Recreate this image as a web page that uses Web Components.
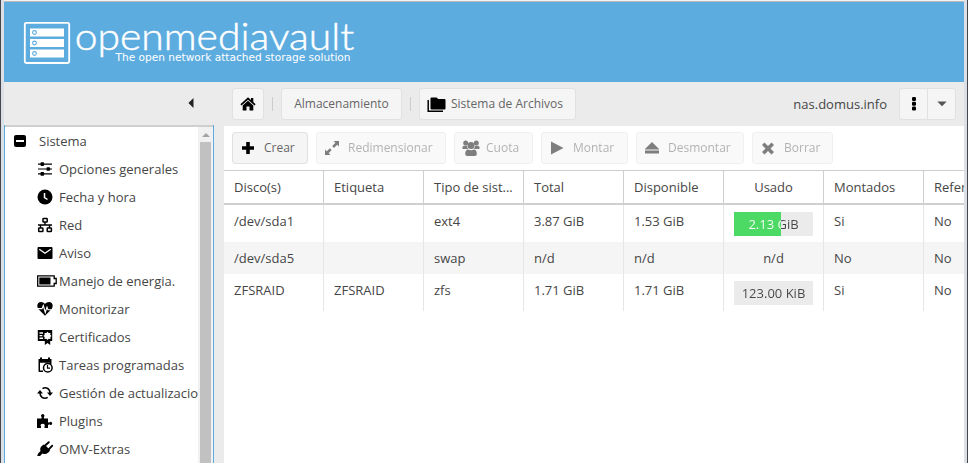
<!DOCTYPE html>
<html lang="es">
<head>
<meta charset="utf-8">
<title>openmediavault</title>
<style>
html,body{margin:0;height:100%;overflow:hidden;background:#ebebeb}
body{font:13px/20px "Open Sans","Noto Sans",sans-serif;color:#464646}
</style>
</head>
<body>
<omv-app></omv-app>
<script>
const icons = {
  home:'<path d="M8 1.300 11 4V2h2.300v4L15.600 8.200 14.500 9.500 8 3.700 1.500 9.500 .4 8.200z"/><path d="M8 4.700 13.300 9.400V14.500H9.500v-4h-3v4H2.700V9.400z"/>',
  folders:'<path d="M4.500 1.500h5l1.800 1.500h6.200q1 0 1 1v8.500q0 1-1 1H4.500q-1 0-1-1v-10q0-1 1-1z"/><path d="M1.200 4v11.200H16" fill="none" stroke="#000" stroke-width="1.500"/>',
  plus:'<path d="M6.200 2h3.600v4.200H14v3.600H9.800V14H6.200V9.800H2V6.200h4.200z"/>',
  resize:'<path d="M9.500 1H15v5.500l-1.800-1.800-3.200 3.200L8.200 6l3.200-3.200zM1 9.500l1.800 1.800L5.800 8.200 7.600 10 4.700 13.200 6.500 15H1z"/>',
  users:'<circle cx="3.700" cy="3.100" r="2.500"/><circle cx="14.300" cy="3.100" r="2.500"/><circle cx="9" cy="5.500" r="3.500"/><path d="M.5 9V7.300Q.5 5.700 2 5.700h3q0 2 1.300 3.300zM17.500 9V7.300q0-1.600-1.500-1.600h-3q0 2-1.300 3.300zM3.200 14q0-4.600 3-4.600Q9 11 11.800 9.400q3 0 3 4.600 0 2-2 2H5.200q-2 0-2-2z"/>',
  play:'<path d="M2 1.400 14.500 8 2 14.600z"/>',
  eject:'<path d="M8 2 15 9H1z"/><path d="M1 9.500h14v1H1zM1 11h14v2.500H1z"/>',
  cross:'<path d="M4.500 2.500 8 6 11.500 2.500 14 5 10.500 8.500 14 12 11.500 14.500 8 11 4.500 14.500 2 12 5.500 8.500 2 5z"/>',
  dots:'<rect x="6" y="1" width="4" height="3.900" rx="1.200"/><rect x="6" y="5.800" width="4" height="3.900" rx="1.200"/><rect x="6" y="10.600" width="4" height="3.900" rx="1.200"/>',
  down:'<path d="M3.300 5.500h9.400L8 10.300z"/>',
  left:'<path d="M10.500 3v10L5.400 8z"/>',
  minus:'<rect x="2" y="2" width="12" height="12" rx="2"/><path d="M4 7h8v2H4z" fill="#fff"/>',
  sliders:'<path d="M1 2.500h14v1.200H1zM1 7.400h14v1.200H1zM1 12.300h14v1.200H1z"/><rect x="3.500" y="1.300" width="3.600" height="3.600" rx=".8"/><rect x="9.500" y="6.200" width="3.600" height="3.600" rx=".8"/><rect x="3.500" y="11.100" width="3.600" height="3.600" rx=".8"/>',
  clock:'<circle cx="8" cy="8" r="7.500"/><path d="M7.500 4v4.500l3 2" fill="none" stroke="#fff" stroke-width="1.500"/>',
  network:'<path d="M8 5v3M1 8h14M3.500 8v3M12.500 8v3" fill="none" stroke="#000" stroke-width="1.400"/><g fill="none" stroke="#000" stroke-width="1.500"><rect x="6" y="1.500" width="4.200" height="3.600" rx=".6"/><rect x="1.700" y="11" width="4.200" height="3.600" rx=".6"/><rect x="10.200" y="11" width="4.200" height="3.600" rx=".6"/></g>',
  mail:'<rect x=".5" y="2" width="15" height="12" rx="1"/><path d="m2.300 4.200 5.700 4 5.700-4" fill="none" stroke="#fff" stroke-width="1.300"/>',
  battery:'<path d="M.7 2.800h16.500V5.500h2v5h-2v2.700H.7z" fill="none" stroke="#000" stroke-width="1.300"/><path d="M2.300 4.500h11.200v7H2.300z"/>',
  heart:'<path d="M8 14.800 1.300 8C-1 4.300 1 .8 4 .9 6.200 1 7.300 2 8 3c.7-1 1.800-2 4-2.100 3-.1 5 3.400 2.700 7.100z"/><path d="M1 7.600h4L6.300 4.500l2 7L10 6.200l1 2.500h4" fill="none" stroke="#fff" stroke-width="1.100"/>',
  cert:'<path d="M.8 1h14.400v11h-2v4l-2.700-2-2.700 2v-4h-7z"/><path d="M2.500 3.300H6v1.400H2.500zM2.500 6h2.800v1.300H2.500zM2.500 8.600H6V10H2.500z" fill="#fff"/><path d="m10.500 2.800 1.200 1.300 1.800-.2-.2 1.800 1.300 1.200-1.300 1.200.2 1.800-1.800-.2-1.200 1.300-1.200-1.300-1.800.2.2-1.800L6.400 6.900l1.300-1.200-.2-1.800 1.800.2z" fill="#fff"/>',
  calendar:'<path d="M3 .5h2V2h6V.5h2V2h1.500v5H13V5.800H3v7.700h3V15H2.500Q1.500 15 1.500 14V2H3z"/><circle cx="10.800" cy="10.800" r="4.300" fill="#fff" stroke="#000" stroke-width="1.500"/><path d="M10.500 8v3.200H13" fill="none" stroke="#000" stroke-width="1.200"/>',
  sync:'<path d="M5.500 3.600Q8 2 10.800 3.500 13 5 13 8M10.700 12.400Q8 14 5.200 12.500 3 11 3 8" fill="none" stroke="#000" stroke-width="1.600"/><path d="M10 7.500h6L13 11zM0 8.500h6L3 5z"/>',
  puzzle:'<path d="M0 5.500h4.200q1-.5.3-1.600A1.700 1.700 0 1 1 7 3.900Q6.300 5 7.300 5.500H11V9q.7.900 1.800.2a1.500 1.500 0 1 1 0 2.400Q11.700 11 11 12v3H7.500v-1.500q1-1.500-.5-2.500-1.600-.8-3 .3-1 1 0 2.200V15H0z"/>',
  plug:'<path d="M6.500 3.500 13 9.800 11.300 11.500Q8.500 14 5.500 12.500L3 15H.2l.9-2.500L3.500 10Q2.500 7 4.800 5.100z"/><path d="M7.500 5 11.800 1.200M11.500 8.700 15.300 4.700" fill="none" stroke="#000" stroke-width="1.900" stroke-linecap="round"/><path d="m8 4 5 5-1 1-5-5z"/>'
};
const define = (name, markup) => customElements.define(name, class extends HTMLElement {
  connectedCallback(){
    if (this.shadowRoot) return;
    const root = this.attachShadow({mode:'open'});
    root.innerHTML = typeof markup === 'function' ? markup(this) : markup;
  }
});

define('omv-icon', el => {
  const w = el.getAttribute('w') || 16;
  return `<style>:host{display:block;width:${w}px;height:16px;flex:none}svg{display:block;fill:currentColor}</style>
  <svg width="${w}" height="16" viewBox="0 0 ${w} 16">${icons[el.getAttribute('name')]}</svg>`;
});

define('omv-button', `<style>
:host{display:flex;box-sizing:border-box;height:32px;align-items:center;border:1px solid #e1e1e1;border-radius:3px;background:#f5f5f5;color:#666;white-space:nowrap;flex:none;font-size:12px;line-height:18px;padding:0 0 1px 7px;gap:7px}
:host([disabled]){opacity:.5}
::slotted(omv-icon){color:#000}
:host([center]){justify-content:center;padding:0}
</style><slot></slot>`);

define('omv-logo', `<style>:host{display:block;width:360px;height:80px}svg{display:block}</style>
<svg width="360" height="80" viewBox="4 2 360 80">
<rect x="24.800" y="22.800" width="44.400" height="40.200" rx="1.500" fill="none" stroke="#fff" stroke-width="1.800"/>
<g fill="#fff"><rect x="30" y="28.500" width="34" height="8"/><rect x="30" y="39" width="34" height="8"/><rect x="30" y="49.500" width="34" height="8"/></g>
<g fill="none" stroke="#5dacdf" stroke-width="1.100"><circle cx="34.500" cy="32.500" r="1.900"/><circle cx="34.500" cy="43" r="1.900"/><circle cx="34.500" cy="53.500" r="1.900"/></g>
<text x="74.700" y="50" font-family="Lato,sans-serif" font-weight="300" font-size="38" fill="#fff" stroke="#fff" stroke-width=".45" textLength="279.500" lengthAdjust="spacingAndGlyphs">openmediavault</text>
<text x="115.500" y="61" font-family="DejaVu Sans,sans-serif" font-size="10.500" fill="#fff" textLength="235" lengthAdjust="spacingAndGlyphs">The open network attached storage solution</text>
</svg>`);

define('nav-item', el => `<style>
:host{display:flex;height:28px;align-items:center;padding-left:32px;white-space:nowrap}
:host([root]){padding-left:7px}
.i{width:22px;flex:none;color:#000}
:host([root]) .i{width:27px}
</style><div class="i"><omv-icon name="${el.getAttribute('icon')}" w="${el.getAttribute('icon') === 'battery' ? 21 : 16}"></omv-icon></div><span><slot></slot></span>`);

define('omv-sidebar', `<style>
:host{display:flex;flex-direction:column;width:210px;flex:none}
.head{height:43px;box-sizing:border-box;padding:13px 15px 0 0;display:flex;justify-content:flex-end;color:#222}
.panel{flex:1;min-height:0;display:flex;background:#fff;border:1px solid #5dacdf;border-width:0 1px;box-shadow:inset 0 2px #cfcfcf}
.tree{width:193px;overflow:hidden;padding-top:2px}
nav-item[icon=battery],nav-item[icon=puzzle]{margin-left:0}
.scroll{width:15px;margin-top:2px;background:#f1f1f1;display:flex;flex-direction:column;align-items:center}
.arrow{width:0;height:0;border:4px solid transparent;border-top:0;border-bottom:4px solid #a3a3a3;margin:6px 0 5px}
.thumb{width:11px;flex:1;background:#c1c1c1}
</style>
<div class="head"><omv-icon name="left"></omv-icon></div>
<div class="panel"><div class="tree">
<nav-item root icon="minus">Sistema</nav-item>
<nav-item icon="sliders">Opciones generales</nav-item>
<nav-item icon="clock">Fecha y hora</nav-item>
<nav-item icon="network">Red</nav-item>
<nav-item icon="mail">Aviso</nav-item>
<nav-item icon="battery">Manejo de energia.</nav-item>
<nav-item icon="heart">Monitorizar</nav-item>
<nav-item icon="cert">Certificados</nav-item>
<nav-item icon="calendar">Tareas programadas</nav-item>
<nav-item icon="sync">Gestión de actualizacio</nav-item>
<nav-item icon="puzzle">Plugins</nav-item>
<nav-item icon="plug">OMV-Extras</nav-item>
</div><div class="scroll"><div class="arrow"></div><div class="thumb"></div></div></div>`);

define('omv-breadcrumb', `<style>
:host{display:flex;height:44px;box-sizing:border-box;padding:6px 8px 0;align-items:flex-start}
i{width:1px;height:14px;background:#ccc;margin:9px 8px 0}
span{margin:6px 12px 0 auto}
.l{border-radius:3px 0 0 3px}.r{border-radius:0 3px 3px 0;margin-left:-1px}
.r omv-icon{color:#555}
</style>
<omv-button center style="width:32px"><omv-icon name="home"></omv-icon></omv-button><i></i>
<omv-button center style="width:121px">Almacenamiento</omv-button><i></i>
<omv-button style="width:157px;gap:4px"><omv-icon name="folders" w="20"></omv-icon>Sistema de Archivos</omv-button>
<span>nas.domus.info</span>
<omv-button center class="l" style="width:29px"><omv-icon name="dots"></omv-icon></omv-button>
<omv-button center class="r" style="width:29px"><omv-icon name="down"></omv-icon></omv-button>`);

define('omv-toolbar', `<style>:host{display:flex;gap:8px;height:44px;padding:6px 8px 0;box-sizing:border-box;background:#fff}</style>
<omv-button style="width:76px;gap:8px"><omv-icon name="plus"></omv-icon>Crear</omv-button>
<omv-button disabled style="width:130px;gap:8px"><omv-icon name="resize"></omv-icon>Redimensionar</omv-button>
<omv-button disabled style="width:79px;gap:6px"><omv-icon name="users" w="18"></omv-icon>Cuota</omv-button>
<omv-button disabled style="width:87px;gap:8px"><omv-icon name="play"></omv-icon>Montar</omv-button>
<omv-button disabled style="width:108px;gap:8px"><omv-icon name="eject"></omv-icon>Desmontar</omv-button>
<omv-button disabled style="width:81px;gap:8px"><omv-icon name="cross"></omv-icon>Borrar</omv-button>`);

define('usage-bar', el => {
  const v = el.getAttribute('value') + 'px';
  return `<style>
:host{display:block;margin-top:1px;height:24px;width:79px;background:linear-gradient(90deg,#4cd964 ${v},#ebebeb ${v});text-align:center;line-height:25px}
div{background:linear-gradient(90deg,#fff ${v},#464646 ${v});-webkit-background-clip:text;background-clip:text;color:transparent}
</style><div>${el.getAttribute('label')}</div>`;
});

const rows = [
  [37,'/dev/sda1','','ext4','3.87 GiB','1.53 GiB','<usage-bar value="47" label="2.13 GiB"></usage-bar>','Si','No'],
  [32,'/dev/sda5','','swap','n/d','n/d','n/d','No','No'],
  [37,'ZFSRAID','ZFSRAID','zfs','1.71 GiB','1.71 GiB','<usage-bar value="0" label="123.00 KiB"></usage-bar>','Si','No']
];
const columns = ['Disco(s)','Etiqueta','Tipo de sist...','Total','Disponible','Usado','Montados','Refer'];
define('omv-grid', () => `<style>
:host{display:block;background:#fff;flex:1;overflow:hidden;border-top:1px solid #cfcfcf}
.row{display:grid;grid-template-columns:repeat(8,100px);width:800px}
.row>div{box-sizing:border-box;padding:6px 10px 0;border-right:1px solid #e6e6e6;white-space:nowrap}
.row>div:nth-child(6){text-align:center}
.head{height:34px;box-sizing:border-box;border-bottom:2px solid #cfcfcf}
.head>div{border-color:#cfcfcf}
.alt{background:#f5f5f5}
</style>
<div class="row head">${columns.map(t => `<div>${t}</div>`).join('')}</div>
${rows.map(([h, ...c], i) => `<div class="row${i % 2 ? ' alt' : ''}" style="height:${h}px">${c.map(t => `<div>${t}</div>`).join('')}</div>`).join('')}`);

define('omv-app', `<style>
:host{display:flex;flex-direction:column;box-sizing:border-box;width:968px;height:463px;overflow:hidden;border:solid #45454a;border-width:0 1px;background:#dbdfe6;padding:0 3px}
.top{height:2px;box-sizing:border-box;background:#f3f3f3;border-bottom:1px solid #b9b9b9;flex:none}
header{height:80px;flex:none;background:#5dacdf}
.body{flex:1;min-height:0;display:flex;gap:10px;background:#ebebeb}
main{flex:1;min-width:0;display:flex;flex-direction:column}
</style>
<div class="top"></div><header><omv-logo></omv-logo></header>
<div class="body"><omv-sidebar></omv-sidebar><main><omv-breadcrumb></omv-breadcrumb><omv-toolbar></omv-toolbar><omv-grid></omv-grid></main></div>`);
</script>
</body>
</html>
